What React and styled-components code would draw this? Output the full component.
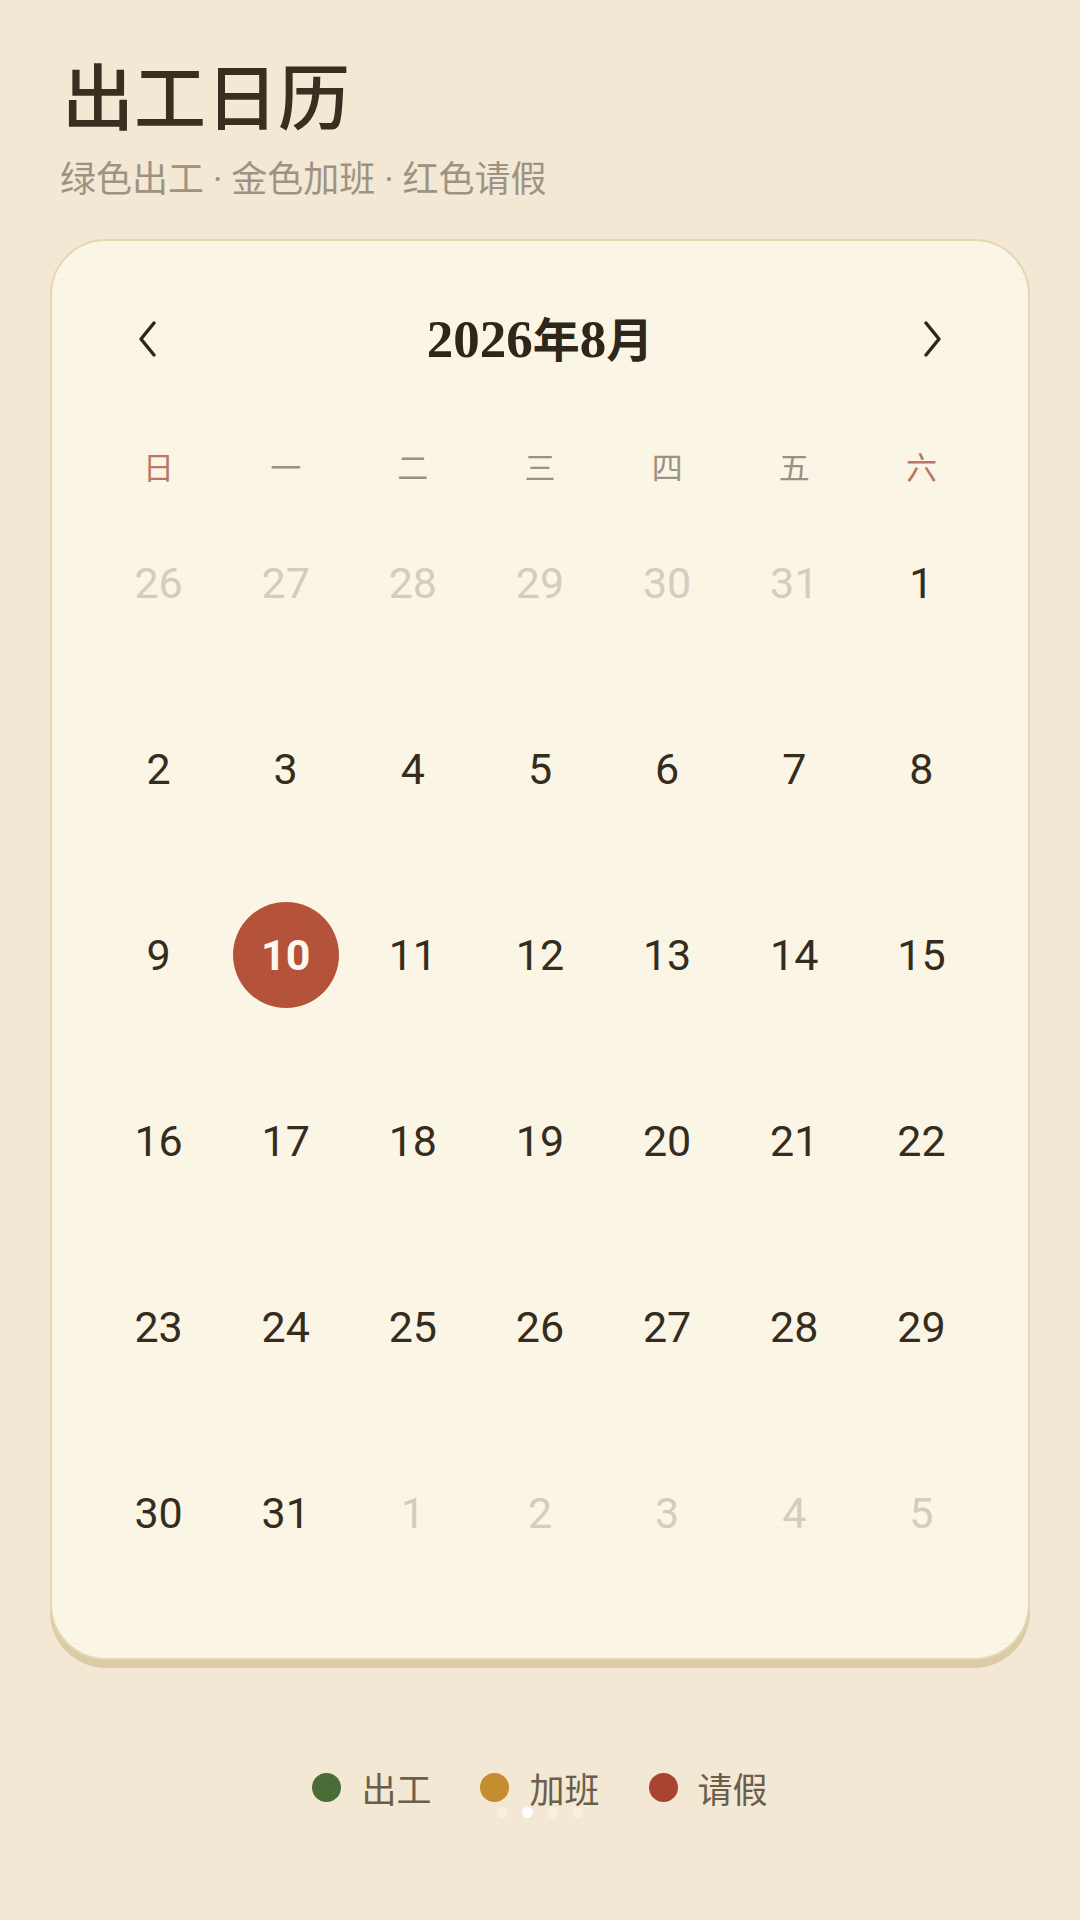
import React from "react";
import styled, { createGlobalStyle } from "styled-components";

const Global = createGlobalStyle`
  html, body { margin: 0; padding: 0; background: #f3e8d4; }
  body { font-family: "Noto Sans CJK SC", "Noto Sans", sans-serif; }
`;

const Page = styled.div`
  width: 1080px;
  min-height: 1920px;
  box-sizing: border-box;
  padding: 57px 50px 0;
  background: #f3e8d4;
  display: flex;
  flex-direction: column;
`;

const Title = styled.h1`
  margin: 0 0 0 12px;
  font-size: 72px;
  line-height: 1;
  font-weight: 500;
  color: #3a2e20;
`;

const Subtitle = styled.p`
  margin: 29px 0 0 10px;
  font-size: 36px;
  line-height: 1;
  color: #9e9383;
`;

const Sep = styled.span`
  font-family: Roboto, "Liberation Sans", sans-serif;
  white-space: pre;
`;

const Card = styled.section`
  margin-top: 41px;
  box-sizing: border-box;
  width: 980px;
  border: 2px solid #e3d6b3;
  border-radius: 56px;
  background-color: #fbf5e6;
  background-image: repeating-linear-gradient(
    to bottom,
    rgba(200, 185, 150, 0) 0px,
    rgba(200, 185, 150, 0) 37px,
    rgba(200, 185, 150, 0.04) 37px,
    rgba(200, 185, 150, 0.04) 39px
  );
  box-shadow: 0 8px 0 #dccba7;
  padding: 58px 43px 52px;
`;

const Header = styled.div`
  height: 80px;
  padding: 0 40px;
  display: flex;
  align-items: center;
  justify-content: space-between;
`;

const NavButton = styled.button`
  width: 26px;
  height: 40px;
  padding: 0;
  border: none;
  background: none;
  display: flex;
  align-items: center;
  justify-content: center;
  color: #2e261b;
`;

const Month = styled.h2`
  margin: 0;
  font-family: "Liberation Serif", "Noto Sans CJK SC", serif;
  font-weight: 700;
  font-size: 53px;
  line-height: 1;
  color: #2e261b;
  & span {
    font-family: "Noto Sans CJK SC", sans-serif;
    font-size: 47px;
  }
`;

const Grid = styled.div`
  display: grid;
  grid-template-columns: repeat(7, 1fr);
`;

const WeekRow = styled(Grid)`
  margin-top: 64px;
  height: 44px;
`;

const WeekDay = styled.div`
  display: flex;
  align-items: center;
  justify-content: center;
  font-size: 31px;
  color: ${(p) => (p.$weekend ? "#bb7765" : "#9b9181")};
`;

const DayGrid = styled(Grid)`
  margin-top: 3px;
`;

const DayCell = styled.div`
  height: 186px;
  display: flex;
  align-items: center;
  justify-content: center;
`;

const DayNum = styled.span`
  width: 106px;
  height: 106px;
  border-radius: 50%;
  display: flex;
  align-items: center;
  justify-content: center;
  font-family: Roboto, "Liberation Sans", sans-serif;
  font-size: 43px;
  font-weight: ${(p) => (p.$today ? 700 : 400)};
  color: ${(p) => (p.$today ? "#fff8ee" : p.$muted ? "#d3ccc0" : "#352c20")};
  background: ${(p) => (p.$today ? "#b4533a" : "transparent")};
`;

const Legend = styled.div`
  margin-top: 107px;
  height: 40px;
  display: flex;
  justify-content: center;
  align-items: center;
  gap: 49px;
`;

const LegendItem = styled.div`
  display: flex;
  align-items: center;
  gap: 20px;
  font-size: 35px;
  color: #6b5e4c;
`;

const Dot = styled.span`
  width: 29px;
  height: 29px;
  border-radius: 50%;
  background: ${(p) => p.$color};
`;

const Pager = styled.div`
  margin-top: 0;
  display: flex;
  justify-content: center;
  gap: 14px;
`;

const PagerDot = styled.span`
  width: 11px;
  height: 11px;
  border-radius: 50%;
  background: ${(p) => (p.$active ? "#ffffff" : "rgba(255,255,255,0.35)")};
`;

const Chevron = ({ dir }) => (
  <svg width="22" height="36" viewBox="0 0 22 36" fill="none">
    <polyline
      points={dir === "left" ? "17,2 4,18 17,34" : "5,2 18,18 5,34"}
      stroke="currentColor"
      strokeWidth="3.4"
      strokeLinecap="round"
      strokeLinejoin="round"
    />
  </svg>
);

const weekdays = ["日", "一", "二", "三", "四", "五", "六"];

const days = [];
[26, 27, 28, 29, 30, 31].forEach((d) => days.push({ d, muted: true }));
for (let i = 1; i <= 31; i++) days.push({ d: i, today: i === 10 });
[1, 2, 3, 4, 5].forEach((d) => days.push({ d, muted: true }));

export default function App() {
  return (
    <>
      <Global />
      <Page>
        <Title>出工日历</Title>
        <Subtitle>
          绿色出工<Sep> · </Sep>金色加班<Sep> · </Sep>红色请假
        </Subtitle>
        <Card>
          <Header>
            <NavButton aria-label="上个月">
              <Chevron dir="left" />
            </NavButton>
            <Month>
              2026<span>年</span>8<span>月</span>
            </Month>
            <NavButton aria-label="下个月">
              <Chevron dir="right" />
            </NavButton>
          </Header>
          <WeekRow>
            {weekdays.map((w, i) => (
              <WeekDay key={w} $weekend={i === 0 || i === 6}>
                {w}
              </WeekDay>
            ))}
          </WeekRow>
          <DayGrid>
            {days.map((x, i) => (
              <DayCell key={i}>
                <DayNum $muted={x.muted} $today={x.today}>
                  {x.d}
                </DayNum>
              </DayCell>
            ))}
          </DayGrid>
        </Card>
        <Legend>
          <LegendItem>
            <Dot $color="#4a6c36" />
            出工
          </LegendItem>
          <LegendItem>
            <Dot $color="#c48d2f" />
            加班
          </LegendItem>
          <LegendItem>
            <Dot $color="#a8442f" />
            请假
          </LegendItem>
        </Legend>
        <Pager>
          <PagerDot />
          <PagerDot $active />
          <PagerDot />
          <PagerDot />
        </Pager>
      </Page>
    </>
  );
}
